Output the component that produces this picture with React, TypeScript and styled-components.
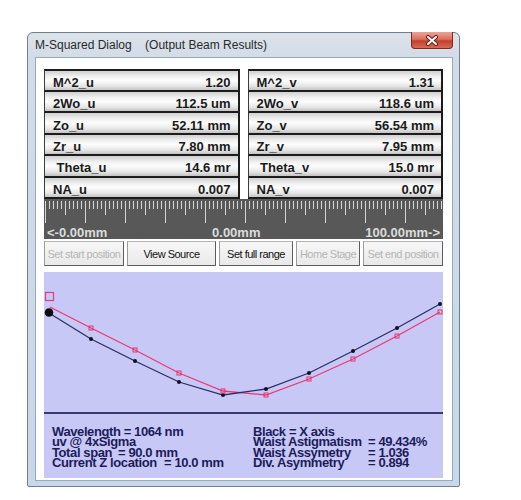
import React from "react";
import styled, { createGlobalStyle } from "styled-components";

const Global = createGlobalStyle`
  html, body { margin: 0; padding: 0; background: #ffffff; }
  body { font-family: "Liberation Sans", Arial, sans-serif; }
`;

const Page = styled.div`
  padding: 32px 0 0 27px;
`;

const Window = styled.div`
  width: 433px;
  box-sizing: border-box;
  border: 1px solid #6e7e93;
  border-radius: 6px 6px 2px 2px;
  background: linear-gradient(to bottom, #dde2e8 0px, #d2dce8 24px, #c8d7e9 100%);
  padding: 0 6px 5px 7px;
`;

const TitleBar = styled.div`
  height: 24px;
  display: flex;
  align-items: flex-start;
  justify-content: space-between;
`;

const Title = styled.div`
  font: 12px "Liberation Sans", Arial, sans-serif;
  line-height: 24px;
  color: #2a2a2a;
  white-space: pre;
`;

const CloseButton = styled.div`
  width: 42px;
  height: 17px;
  box-sizing: border-box;
  margin-top: -1px;
  border: 1px solid #7b2a20;
  border-top: 0;
  border-radius: 0 0 4px 4px;
  background: linear-gradient(to bottom, #eaa497 0%, #d9705e 45%, #c2402d 55%, #d66a52 100%);
  display: flex;
  align-items: center;
  justify-content: center;
`;

const Client = styled.div`
  background: #ffffff;
  border: 1px solid #98a9be;
  padding: 11px 9px 2px 8px;
  display: flex;
  flex-direction: column;
`;

const ParamGrid = styled.div`
  display: grid;
  grid-template-columns: 1fr 1fr;
  grid-template-rows: repeat(6, 1fr);
  grid-auto-flow: column;
  column-gap: 8px;
  height: 130px;
`;

const Cell = styled.div<{ $first?: boolean }>`
  display: flex;
  align-items: center;
  justify-content: space-between;
  box-sizing: border-box;
  padding: 4px 7px 0 8px;
  border-left: 1px solid #3c3c3c;
  border-right: 2px solid #1c1c1c;
  border-bottom: 2px solid #1c1c1c;
  border-top: ${(p) => (p.$first ? "2px solid #1c1c1c" : "0")};
  background: linear-gradient(to bottom, #d0d0d0 0%, #f1f1f1 30%, #fdfdfd 50%, #e5e5e5 80%, #c3c3c3 100%);
  font: bold 13px "Liberation Sans", Arial, sans-serif;
  color: #1a1a1a;
`;

const CellLabel = styled.span`
  white-space: pre;
`;

const Ruler = styled.div`
  height: 40px;
  background: #585858;
  display: flex;
  flex-direction: column;
  justify-content: space-between;
`;

const RulerLabels = styled.div`
  display: flex;
  justify-content: space-between;
  padding: 0 3px 0 3px;
  font: bold 13px "Liberation Sans", Arial, sans-serif;
  line-height: 13px;
  color: #dcdcdc;
`;

const ButtonRow = styled.div`
  display: flex;
  gap: 3px;
  margin-top: 2px;
`;

const Btn = styled.button<{ $w: number }>`
  width: ${(p) => p.$w}px;
  height: 25px;
  box-sizing: border-box;
  padding: 0;
  border: 1px solid;
  border-color: #b4b4b4 #5c5c5c #5c5c5c #9c9c9c;
  background: linear-gradient(to bottom, #f7f7f7, #e9e9e9);
  font: 11px "Liberation Sans", Arial, sans-serif;
  letter-spacing: -0.5px;
  color: #111111;
  white-space: nowrap;
  &:disabled {
    color: #b5b5b5;
  }
`;

const ChartBox = styled.div`
  margin-top: 6px;
  height: 140px;
  background: #c8c8f7;
`;

const InfoBox = styled.div`
  height: 66px;
  box-sizing: border-box;
  border-top: 2px solid #3a3a6c;
  background: #c8c8f7;
  padding: 13px 0 0 8px;
  display: grid;
  grid-template-columns: 201px 1fr;
  align-content: start;
`;

const InfoCol = styled.div`
  display: flex;
  flex-direction: column;
  font: bold 13px "Liberation Sans", Arial, sans-serif;
  letter-spacing: -0.4px;
  line-height: 10.3px;
  color: #1c1c5a;
  white-space: pre;
`;

const Key = styled.span<{ $w: number }>`
  display: inline-block;
  width: ${(p) => p.$w}px;
`;

const leftParams: [string, string][] = [
  ["M^2_u", "1.20"],
  ["2Wo_u", "112.5 um"],
  ["Zo_u", "52.11 mm"],
  ["Zr_u", "7.80 mm"],
  [" Theta_u", "14.6 mr"],
  ["NA_u", "0.007"],
];
const rightParams: [string, string][] = [
  ["M^2_v", "1.31"],
  ["2Wo_v", "118.6 um"],
  ["Zo_v", "56.54 mm"],
  ["Zr_v", "7.95 mm"],
  [" Theta_v", "15.0 mr"],
  ["NA_v", "0.007"],
];

const buttons: { label: string; w: number; disabled: boolean }[] = [
  { label: "Set start position", w: 80, disabled: true },
  { label: "View Source", w: 89, disabled: false },
  { label: "Set full range", w: 74, disabled: false },
  { label: "Home Stage", w: 64, disabled: true },
  { label: "Set end position", w: 80, disabled: true },
];

const blackPts: [number, number][] = [
  [5, 41], [47, 67], [91, 89], [135, 110], [179, 123],
  [222, 117], [265, 101], [309, 79], [353, 56], [396, 32],
];
const pinkPts: [number, number][] = [
  [6, 35], [47, 56], [91, 78], [135, 101], [179, 119],
  [222, 123], [265, 107], [309, 87], [353, 64], [396, 40],
];

function RulerTicks() {
  const ticks: React.ReactNode[] = [];
  for (let x = 1; x < 399; x += 4) {
    const rel = x - 1;
    let h = 8;
    if (rel % 40 === 0) h = 22;
    else if (rel % 20 === 0) h = 14;
    ticks.push(
      <line key={x} x1={x + 0.5} y1={2} x2={x + 0.5} y2={2 + h} stroke="#d6d6d6" strokeWidth={1} />
    );
  }
  return (
    <svg width="399" height="25" viewBox="0 0 399 25">
      {ticks}
    </svg>
  );
}

function BeamChart() {
  const toStr = (pts: [number, number][]) => pts.map((p) => p.join(",")).join(" ");
  return (
    <svg width="399" height="140" viewBox="0 0 399 140">
      <polyline points={toStr(pinkPts)} fill="none" stroke="#ec3a74" strokeWidth={1.3} />
      <polyline points={toStr(blackPts)} fill="none" stroke="#2a3060" strokeWidth={1.3} />
      <rect x={1.5} y={20.5} width={8} height={8} fill="none" stroke="#e0407a" strokeWidth={1.2} />
      <circle cx={5} cy={40.5} r={4.3} fill="#0c0c0c" />
      {blackPts.slice(1).map(([x, y]) => (
        <circle key={`b${x}`} cx={x} cy={y} r={2} fill="#101020" />
      ))}
      {pinkPts.slice(1).map(([x, y]) => (
        <rect key={`p${x}`} x={x - 2} y={y - 2} width={4} height={4} fill="none" stroke="#e83070" strokeWidth={1} />
      ))}
    </svg>
  );
}

export default function App() {
  return (
    <>
      <Global />
      <Page>
        <Window>
          <TitleBar>
            <Title>{"M-Squared Dialog    (Output Beam Results)"}</Title>
            <CloseButton>
              <svg width="14" height="11" viewBox="0 0 14 11">
                <path d="M3 2 L11 9 M11 2 L3 9" stroke="#6a1e14" strokeWidth={4} strokeLinecap="round" />
                <path d="M3 2 L11 9 M11 2 L3 9" stroke="#ffffff" strokeWidth={2} strokeLinecap="round" />
              </svg>
            </CloseButton>
          </TitleBar>
          <Client>
            <ParamGrid>
              {leftParams.map(([k, v], i) => (
                <Cell key={`l${i}`} $first={i === 0}>
                  <CellLabel>{k}</CellLabel>
                  <span>{v}</span>
                </Cell>
              ))}
              {rightParams.map(([k, v], i) => (
                <Cell key={`r${i}`} $first={i === 0}>
                  <CellLabel>{k}</CellLabel>
                  <span>{v}</span>
                </Cell>
              ))}
            </ParamGrid>
            <Ruler>
              <RulerTicks />
              <RulerLabels>
                <span>{"<-0.00mm"}</span>
                <span>0.00mm</span>
                <span>{"100.00mm->"}</span>
              </RulerLabels>
            </Ruler>
            <ButtonRow>
              {buttons.map((b) => (
                <Btn key={b.label} $w={b.w} disabled={b.disabled}>
                  {b.label}
                </Btn>
              ))}
            </ButtonRow>
            <ChartBox>
              <BeamChart />
            </ChartBox>
            <InfoBox>
              <InfoCol>
                <span>Wavelength = 1064 nm</span>
                <span>uv @ 4xSigma</span>
                <span>
                  <Key $w={66}>Total span</Key>= 90.0 mm
                </span>
                <span>
                  <Key $w={112}>Current Z location</Key>= 10.0 mm
                </span>
              </InfoCol>
              <InfoCol>
                <span>Black = X axis</span>
                <span>
                  <Key $w={115}>Waist Astigmatism</Key>= 49.434%
                </span>
                <span>
                  <Key $w={115}>Waist Assymetry</Key>= 1.036
                </span>
                <span>
                  <Key $w={115}>Div. Asymmetry</Key>= 0.894
                </span>
              </InfoCol>
            </InfoBox>
          </Client>
        </Window>
      </Page>
    </>
  );
}
